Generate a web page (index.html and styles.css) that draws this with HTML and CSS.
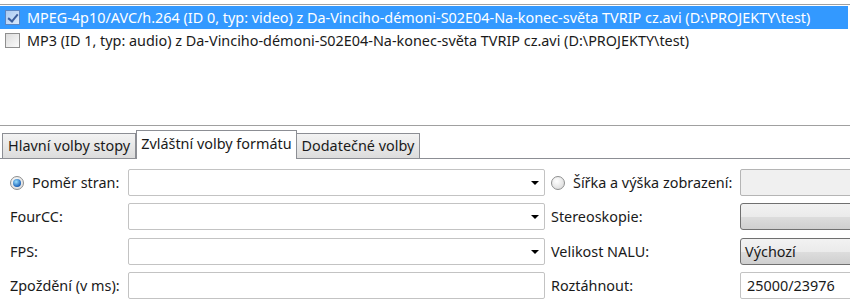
FILE: index.html
```html
<!DOCTYPE html>
<html lang="cs">
<head>
    <meta charset="UTF-8">
    <title>Volby stopy</title>
    <link rel="stylesheet" href="styles.css">
</head>
<body>
    <!-- Track list -->
    <div class="tracks">
        <div class="track selected">
            <span class="check checked"></span>
            <span>MPEG-4p10/AVC/h.264 (ID 0, typ: video) z Da-Vinciho-démoni-S02E04-Na-konec-světa TVRIP cz.avi (D:\PROJEKTY\test)</span>
        </div>
        <div class="track">
            <span class="check"></span>
            <span>MP3 (ID 1, typ: audio) z Da-Vinciho-démoni-S02E04-Na-konec-světa TVRIP cz.avi (D:\PROJEKTY\test)</span>
        </div>
    </div>

    <!-- Tabs -->
    <div class="tabs">
        <div class="tab">Hlavní volby stopy</div>
        <div class="tab active">Zvláštní volby formátu</div>
        <div class="tab">Dodatečné volby</div>
    </div>

    <!-- Format options -->
    <div class="options">
        <label class="radio-label"><span class="radio on"></span>Poměr stran:</label>
        <div class="combo"><span class="arrow"></span></div>
        <label class="radio-label"><span class="radio"></span>Šířka a výška zobrazení:</label>
        <div class="field disabled"></div>

        <label>FourCC:</label>
        <div class="combo"><span class="arrow"></span></div>
        <label>Stereoskopie:</label>
        <div class="button-combo"></div>

        <label>FPS:</label>
        <div class="combo"><span class="arrow"></span></div>
        <label>Velikost NALU:</label>
        <div class="button-combo">Výchozí</div>

        <label>Zpoždění (v ms):</label>
        <div class="field"></div>
        <label>Roztáhnout:</label>
        <div class="field">25000/23976</div>
    </div>
</body>
</html>
```

FILE: styles.css
```css
/* General Styles */
body {
    font-family: 'Noto Sans', sans-serif;
    font-size: 14.4px;
    margin: 0;
    color: #1a1a1a;
    background: #fff;
    overflow: hidden;
}

/* Track list */
.tracks {
    margin-top: 4px;
    height: 122px;
    border-top: 1px solid #a0a0a0;
    border-bottom: 1px solid #a0a0a0;
    padding-top: 1px;
    box-sizing: border-box;
}

.track {
    display: flex;
    align-items: center;
    gap: 7px;
    height: 23px;
    padding-left: 5px;
    margin-right: 2px;
    white-space: nowrap;
}

.track.selected {
    background: #3399ff;
    color: #fff;
}

.check {
    width: 13px;
    height: 13px;
    border: 1px solid #8f8f8f;
    background: linear-gradient(135deg, #dcdcdc, #fbfbfb);
    flex-shrink: 0;
    position: relative;
}

.check.checked {
    border-color: #5a86c4;
    background: linear-gradient(135deg, #a9c9f2, #dbe9fb);
}

.check.checked::after {
    content: '';
    position: absolute;
    left: 4px;
    top: 1px;
    width: 4px;
    height: 8px;
    border-right: 2px solid #3b5d9c;
    border-bottom: 2px solid #3b5d9c;
    transform: rotate(40deg);
}

/* Tabs */
.tabs {
    display: flex;
    align-items: flex-end;
    height: 33px;
    padding-left: 2px;
    border-bottom: 1px solid #8c8e94;
    box-sizing: border-box;
}

.tab {
    height: 25px;
    padding: 0 5px;
    line-height: 24px;
    border: 1px solid #8c8e94;
    border-bottom: none;
    background: linear-gradient(#f3f3f3, #dcdcdc);
    box-sizing: border-box;
}

.tab + .tab {
    border-left: none;
}

.tab.active {
    height: 29px;
    margin-bottom: -1px;
    padding: 0 4px;
    background: #fff;
    border-left: 1px solid #8c8e94;
    line-height: 26px;
}

.tab.active + .tab {
    border-left: none;
}

/* Options grid */
.options {
    display: grid;
    grid-template-columns: 112px 417px 183px 140px;
    column-gap: 6px;
    row-gap: 7.33px;
    padding: 10px 0 0 10px;
    grid-auto-rows: 27px;
    width: 900px;
}

.options label {
    display: flex;
    align-items: center;
    white-space: nowrap;
}

.radio-label {
    gap: 8px;
}

.radio {
    width: 14px;
    height: 14px;
    border-radius: 50%;
    border: 1px solid #8e8f8f;
    background: radial-gradient(circle at 40% 35%, #ffffff, #d4d4d4);
    box-sizing: border-box;
    position: relative;
    flex-shrink: 0;
}

.radio.on::after {
    content: '';
    position: absolute;
    left: 2px;
    top: 2px;
    width: 8px;
    height: 8px;
    border-radius: 50%;
    background: radial-gradient(circle at 40% 35%, #9be0ff, #1a62b8 70%, #0b3d80);
}

.combo,
.field,
.button-combo {
    border: 1px solid #c3c3c3;
    border-radius: 2px;
    background: #fff;
    box-sizing: border-box;
    position: relative;
    display: flex;
    align-items: center;
    padding-left: 6px;
}

.arrow {
    position: absolute;
    right: 5px;
    top: 11px;
    border-left: 4px solid transparent;
    border-right: 4px solid transparent;
    border-top: 4px solid #000;
}

.field.disabled {
    background: #f0f0f0;
    border-color: #b5b5b5;
}

.button-combo {
    border-color: #707070;
    border-radius: 3px;
    background: linear-gradient(#f2f2f2 0%, #ebebeb 50%, #dddddd 51%, #cfcfcf 100%);
    padding-left: 4px;
}
```
